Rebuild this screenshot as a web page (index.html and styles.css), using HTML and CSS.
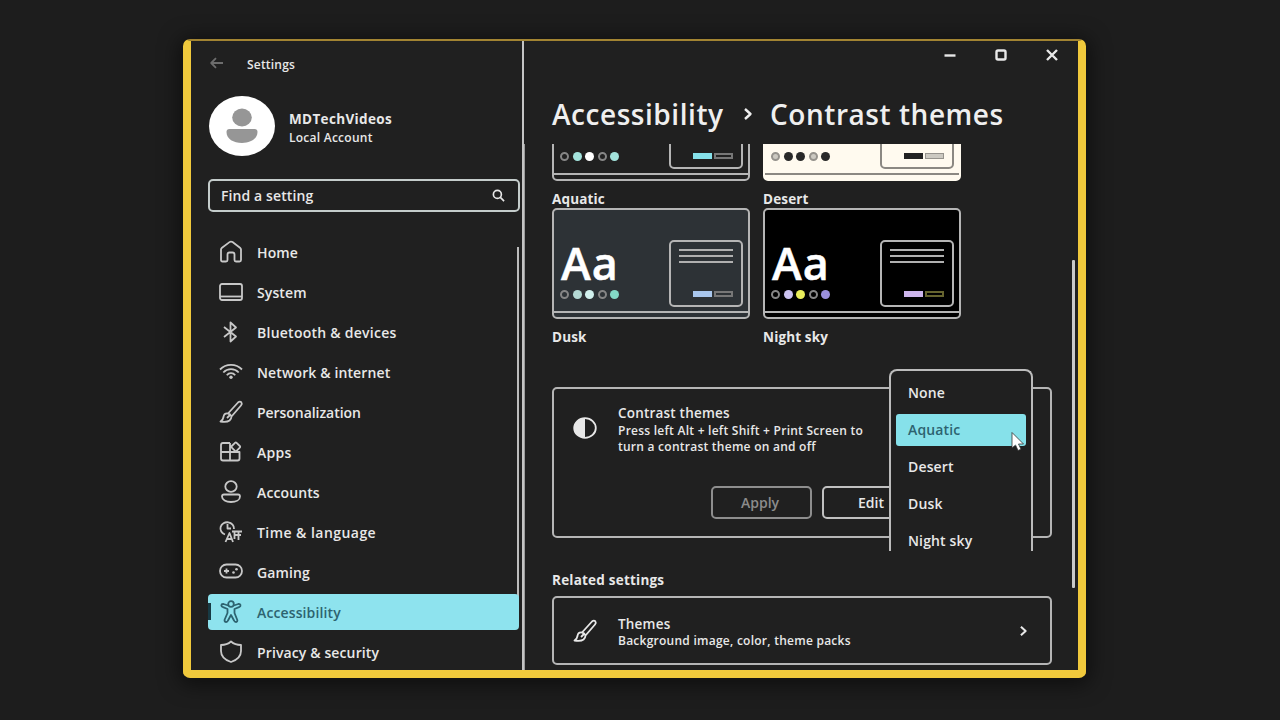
FILE: index.html
```
<!DOCTYPE html>
<html lang="en">
<head>
    <meta charset="UTF-8">
    <meta name="viewport" content="width=device-width, initial-scale=1.0">
    <title>Settings - Contrast themes</title>
    <link rel="stylesheet" href="styles.css">
</head>
<body>
    <div class="window">
        <aside class="sidebar">
            <div class="titlebar">
                <svg class="back" viewBox="0 0 14 12"><path d="M13 6H1.5M6 1.2L1.2 6L6 10.8"/></svg>
                <span class="app-title">Settings</span>
            </div>
            <div class="profile">
                <div class="avatar">
                    <svg viewBox="0 0 66 60"><ellipse cx="33" cy="21.500" rx="9.800" ry="9"/><path d="M20.500 33h25q3 0 3 3c0 7-7 11-15.500 11s-15.500-4-15.500-11q0-3 3-3z"/></svg>
                </div>
                <div class="profile-text">
                    <div class="profile-name">MDTechVideos</div>
                    <div class="profile-type">Local Account</div>
                </div>
            </div>
            <div class="search">
                <span>Find a setting</span>
                <svg viewBox="0 0 14 14"><circle cx="5.800" cy="5.800" r="4.300"/><path d="M9 9l4 4"/></svg>
            </div>
            <nav class="nav">
                <a class="nav-item"><svg viewBox="0 0 24 24"><path d="M2 9.500Q2 8.500 3 7.700L10.500 2.100Q12 1 13.500 2.100L21 7.700Q22 8.500 22 9.500V20Q22 21.500 20.500 21.500H17Q15.500 21.500 15.500 20V14.500Q15.500 12.500 13.500 12.500H10.500Q8.500 12.500 8.500 14.500V20Q8.500 21.500 7 21.500H3.500Q2 21.500 2 20Z"/></svg><span>Home</span></a>
                <a class="nav-item"><svg viewBox="0 0 24 24"><rect x="1" y="4" width="22" height="16" rx="2"/><path d="M1 16.500H23"/></svg><span>System</span></a>
                <a class="nav-item"><svg viewBox="0 0 24 24"><path d="M5 7L17 16.500L11.500 21.500V2.500L17 7.500L5 17"/></svg><span class="wide">Bluetooth &amp; devices</span></a>
                <a class="nav-item"><svg viewBox="0 0 24 24"><path d="M1 9.500C7 3.300 17 3.300 23 9.500M4.300 12.500C8.500 8 15.500 8 19.700 12.500M7.800 15.300C10 12.500 14 12.500 16.200 15.300"/><circle class="fill" cx="12" cy="17.300" r="1.700"/></svg><span>Network &amp; internet</span></a>
                <a class="nav-item"><svg viewBox="0 0 24 24"><path d="M9 13.500L19 2.500Q20.800 1 22.300 2.200Q23.500 3.800 22 5.500L12.500 16.500Q11.500 14 9 13.500ZM9 13.500Q5 13 4.500 17Q4 20 1.500 21.500Q8 22.500 10.500 20.500Q12.500 18.500 12.500 16.500M8 18L11 15"/></svg><span class="tight">Personalization</span></a>
                <a class="nav-item"><svg viewBox="0 0 24 24"><path d="M11 3H4Q2 3 2 5V18.500Q2 20.500 4 20.500H18.500Q20.500 20.500 20.500 18.500V12H2M11 3V20.500M16 2.800Q16.800 2 17.600 2.800L20.800 6Q21.600 6.800 20.800 7.600L17.600 10.800Q16.800 11.600 16 10.800L12.800 7.600Q12 6.800 12.800 6Z"/></svg><span class="wide">Apps</span></a>
                <a class="nav-item"><svg viewBox="0 0 24 24"><ellipse cx="12" cy="6.500" rx="5.700" ry="5.300"/><path d="M5 14.500H19Q21 14.500 21 16.500C21 20 17 22 12 22S3 20 3 16.500Q3 14.500 5 14.500Z"/></svg><span>Accounts</span></a>
                <a class="nav-item"><svg viewBox="0 0 24 24"><path d="M6 14.500A6.800 6.300 0 1 1 15 9M8.500 4V8.500H12M6.500 22L10.500 13L14 22M8 19H12.500M13 11.500H23M15.500 15H22M15.500 11.500V19M19.500 11.500V20"/></svg><span class="wider">Time &amp; language</span></a>
                <a class="nav-item"><svg viewBox="0 0 24 24"><rect x="1" y="4.500" width="22" height="13" rx="6.500"/><path d="M5 11H10M7.500 8.500V13.500"/><circle class="fill" cx="14.500" cy="12.500" r="1.300"/><circle class="fill" cx="17.500" cy="9.300" r="1.300"/></svg><span>Gaming</span></a>
                <a class="nav-item active"><svg viewBox="0 0 24 24"><circle cx="12" cy="4" r="2.800"/><path d="M9.200 5.500L4.500 4Q2.500 3.800 2.300 5.300Q2.300 6.800 4 7.200L8.500 9V13L5.500 20Q5.500 22 7.200 22Q8.500 22 9 20.500L12 15L15 20.500Q15.500 22 17 22Q18.700 21.700 18.300 20L15.500 13V9L20 7.200Q21.800 6.500 21.500 5Q21 3.700 19.300 4L14.800 5.500"/></svg><span>Accessibility</span></a>
                <a class="nav-item"><svg viewBox="0 0 24 24"><path d="M12 1.500Q16 5 22 5V11C22 16.500 18 20 12 22C6 20 2 16.500 2 11V5Q8 5 12 1.500Z"/></svg><span>Privacy &amp; security</span></a>
                <div class="nav-scroll"></div>
            </nav>
        </aside>

        <main class="content">
            <div class="controls">
                <svg viewBox="0 0 14 14"><path d="M1.500 7.500H12.500"/></svg>
                <svg viewBox="0 0 14 14"><rect x="2.500" y="2.500" width="9" height="9" rx="1.500"/></svg>
                <svg viewBox="0 0 14 14"><path d="M2 2L12 12M12 2L2 12"/></svg>
            </div>
            <h1 class="breadcrumb">
                <span class="crumb">Accessibility</span>
                <svg viewBox="0 0 10 14"><path d="M2 2L7.500 7L2 12"/></svg>
                <span class="current">Contrast themes</span>
            </h1>

            <div class="scroller">
                <div class="themes">
                    <div class="theme aquatic">
                        <div class="preview">
                            <div class="sample"><b></b><div class="dots"><i></i><i></i><i></i><i></i><i></i></div></div>
                            <div class="mini"><hr><hr><hr><div class="mini-btns"><i></i><i></i></div></div>
                        </div>
                        <div class="theme-name">Aquatic</div>
                    </div>
                    <div class="theme desert">
                        <div class="preview">
                            <div class="sample"><b></b><div class="dots"><i></i><i></i><i></i><i></i><i></i></div></div>
                            <div class="mini"><hr><hr><hr><div class="mini-btns"><i></i><i></i></div></div>
                        </div>
                        <div class="theme-name">Desert</div>
                    </div>
                    <div class="theme dusk">
                        <div class="preview">
                            <div class="sample"><b>Aa</b><div class="dots"><i></i><i></i><i></i><i></i><i></i></div></div>
                            <div class="mini"><hr><hr><hr><div class="mini-btns"><i></i><i></i></div></div>
                        </div>
                        <div class="theme-name">Dusk</div>
                    </div>
                    <div class="theme night">
                        <div class="preview">
                            <div class="sample"><b>Aa</b><div class="dots"><i></i><i></i><i></i><i></i><i></i></div></div>
                            <div class="mini"><hr><hr><hr><div class="mini-btns"><i></i><i></i></div></div>
                        </div>
                        <div class="theme-name">Night sky</div>
                    </div>
                </div>

                <section class="card contrast">
                    <div class="card-row">
                        <svg class="card-icon" viewBox="0 0 24 24"><ellipse cx="12" cy="12" rx="10.800" ry="9.800"/><path class="fill" d="M12 2.200A10.800 9.800 0 0 0 12 21.800Z"/></svg>
                        <div>
                            <div class="card-title">Contrast themes</div>
                            <div class="card-desc">Press left Alt + left Shift + Print Screen to<br>turn a contrast theme on and off</div>
                        </div>
                    </div>
                    <div class="buttons">
                        <button class="btn disabled">Apply</button>
                        <button class="btn">Edit</button>
                    </div>
                    <div class="dropdown">
                        <div class="option">None</div>
                        <div class="option selected">Aquatic</div>
                        <div class="option">Desert</div>
                        <div class="option">Dusk</div>
                        <div class="option">Night sky</div>
                        <svg class="cursor" viewBox="0 0 14 20"><path d="M1 1V16.500L4.500 13.500L7 19L10 17.700L7.500 12.500H12.500Z"/></svg>
                    </div>
                </section>

                <h2 class="related">Related settings</h2>
                <section class="card link">
                    <svg class="card-icon" viewBox="0 0 24 24"><path d="M9 13.500L19 2.500Q20.800 1 22.300 2.200Q23.500 3.800 22 5.500L12.500 16.500Q11.500 14 9 13.500ZM9 13.500Q5 13 4.500 17Q4 20 1.500 21.500Q8 22.500 10.500 20.500Q12.500 18.500 12.500 16.500M8 18L11 15"/></svg>
                    <div class="link-text">
                        <div class="card-title">Themes</div>
                        <div class="card-desc">Background image, color, theme packs</div>
                    </div>
                    <svg class="chevron" viewBox="0 0 10 14"><path d="M2 2L7.500 7L2 12"/></svg>
                </section>
                <div class="page-scroll"></div>
            </div>
        </main>
    </div>
</body>
</html>
```
FILE: styles.css
```
* { margin: 0; padding: 0; box-sizing: border-box; }
body { font-family: "Open Sans", "Noto Sans", sans-serif; font-weight: 600; font-size: 14px; color: #e8e8e8; background: #1d1d1d; height: 720px; overflow: hidden; padding: 39px 0 0 183px; white-space: nowrap; }
svg { fill: none; stroke: currentColor; stroke-width: 1.8; stroke-linejoin: round; flex: none; overflow: visible; }
svg .fill { fill: currentColor; stroke: none; }

.window { width: 903px; height: 639px; display: flex; background: #202020; border: solid #f0c93c; border-width: 2px 8px 8px; border-top-color: #a28432; border-radius: 7px; box-shadow: 0 3px 20px 4px rgba(0, 0, 0, 0.5); }

/* sidebar */
.sidebar { width: 331px; padding-left: 17px; display: flex; flex-direction: column; overflow: hidden; }
.titlebar { display: flex; align-items: center; gap: 23px; height: 45px; padding-left: 2px; }
.back { width: 14px; height: 12px; color: #6d6d6d; }
.app-title { font-size: 12px; letter-spacing: 0.2px; padding-top: 2px; }
.profile { display: flex; align-items: center; gap: 14px; height: 60px; margin-top: 10px; }
.avatar { width: 66px; height: 60px; margin: 2px 0 0 1px; border-radius: 50%; background: #fff; }
.avatar svg { display: block; width: 66px; height: 60px; fill: #969696; stroke: none; }
.profile-text { padding-top: 5px; }
.profile-name { font-size: 13.5px; line-height: 19px; font-weight: 700; letter-spacing: 0.35px; }
.profile-type { font-size: 12px; line-height: 17px; letter-spacing: 0.25px; }
.search { display: flex; align-items: center; justify-content: space-between; width: 312px; height: 33px; margin-top: 24px; padding: 0 13px 0 11px; border: 2px solid #c4cccb; border-radius: 5px; letter-spacing: 0.1px; }
.search svg { width: 13px; height: 13px; }
.nav { position: relative; display: flex; flex-direction: column; gap: 4px; margin-top: 22px; width: 313px; }
.nav-item { position: relative; z-index: 1; display: flex; align-items: center; gap: 14px; width: 311px; height: 36px; padding-left: 11px; flex: none; border-radius: 4px; letter-spacing: 0.12px; }
.nav-item svg { width: 24px; height: 24px; color: #c8c8c8; }
.nav-item .wide { letter-spacing: 0.25px; }
.nav-item .wider { letter-spacing: 0.45px; }
.nav-item .tight { letter-spacing: -0.05px; }
.nav-item.active { background: #8ee3ee; color: #2d6370; }
.nav-item.active::before { content: ''; position: absolute; left: 0; top: 9px; width: 3px; height: 17px; background: #173a44; }
.nav-item.active svg { color: #2d6370; }
.nav-scroll { position: absolute; left: 309px; top: 13px; width: 2px; height: 360px; background: #bcbcbc; }

/* content */
.content { width: 556px; border-left: 2px solid #c4c4c4; display: flex; flex-direction: column; }
.controls { display: flex; gap: 37px; justify-content: flex-end; padding: 7px 19px 0 0; }
.controls svg { width: 14px; height: 14px; stroke-width: 2.4; color: #e8e8e8; }
.breadcrumb { display: flex; align-items: center; height: 38px; margin-top: 33px; margin-bottom: 11px; padding: 0 0 0 28px; font-size: 28px; font-weight: 600; line-height: 38px; letter-spacing: 0.55px; color: #efefef; }
.crumb { width: 191px; }
.breadcrumb svg { width: 10px; height: 14px; margin-right: 17px; stroke-width: 2.4; }
.scroller { position: relative; flex: 1; overflow: hidden; padding-left: 28px; box-shadow: inset 1px 0 0 #999; }
.themes { display: grid; grid-template-columns: 198px 198px; column-gap: 13px; margin-top: -74px; }
.preview { display: flex; justify-content: space-between; height: 111px; border: 2px solid #b5b5b5; border-radius: 5px; padding: 29px 5px 0 7px; background: linear-gradient(#b5b5b5, #b5b5b5) 0 101px / 100% 2px no-repeat var(--bg); overflow: hidden; }
.theme-name { height: 27px; font-size: 13.5px; line-height: 36px; font-weight: 700; letter-spacing: 0.15px; }
.sample b { display: block; height: 51px; font-size: 45px; line-height: 48px; font-weight: 600; letter-spacing: 1px; color: #fff; -webkit-text-stroke: 0.5px #fff; }
.dots { display: flex; gap: 3.5px; margin-left: -1px; }
.dots i { width: 9px; height: 9px; border-radius: 50%; border: 2px solid #858585; }
.mini { width: 74px; height: 67px; border: 2px solid #b5b5b5; border-radius: 5px; padding: 7px 8px 0 8px; margin-top: 1px; }
.mini hr { height: 2px; border: 0; margin-bottom: 4px; background: #b0b0b0; }
.mini-btns { display: flex; justify-content: flex-end; gap: 2px; margin-top: 28px; }
.mini-btns i { width: 19px; height: 6px; border: 2px solid #777; }
.mini-btns i:first-child { border: 0; }
.aquatic { --bg: #202020; }
.aquatic .dots i:nth-child(2), .aquatic .dots i:nth-child(5) { background: #a3e3dc; border: 0; }
.aquatic .dots i:nth-child(3) { background: #fff; border: 0; }
.aquatic .mini-btns i:first-child { background: #86e1ea; }
.desert { --bg: #fffaef; }
.desert .preview { border-color: #fffaef; background-image: linear-gradient(#8b8882, #8b8882); }
.desert .mini { border-color: #8b8882; }
.desert .dots i { background: #292929; border: 0; }
.desert .dots i:nth-child(1), .desert .dots i:nth-child(4) { background: #ccc9c1; border: 2px solid #96938d; }
.desert .mini-btns i:first-child { background: #222; }
.desert .mini-btns i:last-child { background: #ccc9c1; border: 1px solid #96938d; }
.dusk { --bg: #2d3236; }
.dusk .dots i:nth-child(2) { background: #b4d9d4; border: 0; }
.dusk .dots i:nth-child(3) { background: #d1f1ee; border: 0; }
.dusk .dots i:nth-child(5) { background: #83d9c6; border: 0; }
.dusk .mini-btns i:first-child { background: #a9c7ee; }
.night { --bg: #000; }
.night .dots i:nth-child(2) { background: #cbc2f0; border: 0; }
.night .dots i:nth-child(3) { background: #e9ee5b; border: 0; }
.night .dots i:nth-child(5) { background: #9a8fdc; border: 0; }
.night .mini-btns i:first-child { background: #cdb5ec; }
.night .mini-btns i:last-child { border-color: #66642f; }

.card { width: 500px; border: 2px solid #b5b5b5; border-radius: 5px; }
.card-icon { width: 24px; height: 24px; }
.card-title { font-size: 13.5px; line-height: 18px; letter-spacing: 0.2px; }
.card-desc { font-size: 12px; line-height: 16px; letter-spacing: 0.25px; }
.card-row .card-desc { padding-top: 1px; }
.contrast { position: relative; height: 151px; margin-top: 41px; }
.card-row { display: flex; gap: 21px; padding: 15px 0 0 19px; }
.card-row .card-icon { margin-top: 12px; }
.buttons { display: flex; gap: 10px; margin: 31px 0 0 157px; }
.btn { width: 101px; height: 33px; padding: 0 3px 0 0; border: 2px solid #c0c0c0; border-radius: 5px; background: none; color: inherit; font: inherit; }
.btn.disabled { border-color: #8e8e8e; color: #8c8c8c; }
.dropdown { position: absolute; left: 335px; top: -20px; width: 144px; height: 182px; padding: 6px 5px 0; background: #202020; border: 2px solid #bcbcbc; border-bottom: 0; border-radius: 8px 8px 0 0; letter-spacing: 0.15px; }
.option { height: 32px; margin-bottom: 5px; padding-left: 12px; line-height: 31px; border-radius: 3px; }
.option.selected { background: #86e1ea; color: #2d6370; }
.cursor { position: absolute; left: 120px; top: 60px; width: 14px; height: 21px; fill: #fff; stroke: #333; stroke-width: 0.8; }
.related { margin-top: 31px; height: 27px; font-size: 13.5px; line-height: 23px; font-weight: 700; letter-spacing: 0.22px; }
.link { display: flex; align-items: center; height: 69px; padding: 0 22px 0 19px; }
.link-text { flex: 1; margin-left: 21px; padding-top: 3px; }
.chevron { width: 9px; height: 12px; stroke-width: 2.4; }
.page-scroll { position: absolute; left: 548px; top: 116px; width: 3px; height: 328px; border-radius: 1px; background: #c9c9c9; }
```
